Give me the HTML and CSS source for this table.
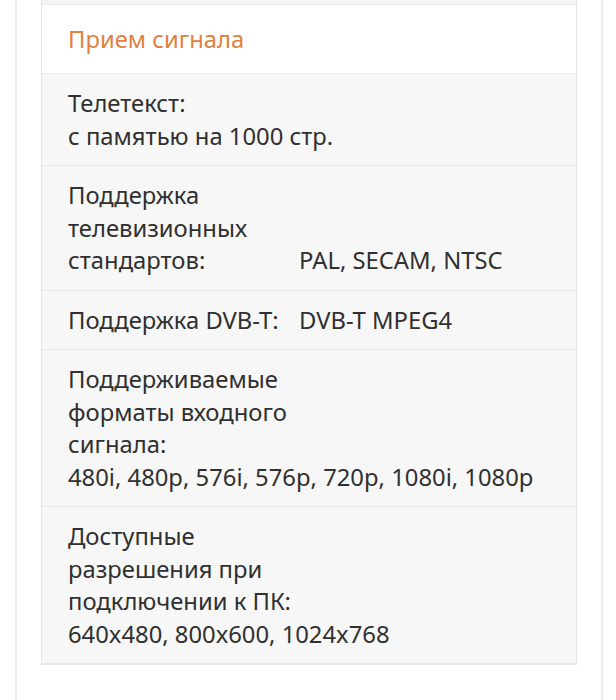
FILE: index.html
```html
<!DOCTYPE html>
<html lang="ru">
<head>
<meta charset="utf-8">
<link rel="stylesheet" href="styles.css">
</head>
<body>
<div class="panel">
  <div class="specs">
    <div class="row row-prev"></div>
    <div class="row row-head">Прием сигнала</div>
    <div class="row">
      <span class="label">Телетекст:</span>
      <span class="value">с памятью на 1000 стр.</span>
    </div>
    <div class="row">
      <span class="label">Поддержка телевизионных стандартов:</span>
      <span class="value">PAL, SECAM, NTSC</span>
    </div>
    <div class="row">
      <span class="label">Поддержка DVB-T:</span>
      <span class="value">DVB-T MPEG4</span>
    </div>
    <div class="row">
      <span class="label">Поддерживаемые форматы входного сигнала:</span>
      <span class="value">480i, 480p, 576i, 576p, 720p, 1080i, 1080p</span>
    </div>
    <div class="row">
      <span class="label">Доступные разрешения при подключении к ПК:</span>
      <span class="value">640x480, 800x600, 1024x768</span>
    </div>
  </div>
</div>
</body>
</html>
```

FILE: styles.css
```css
html, body {
  margin: 0;
  padding: 0;
  background: #ffffff;
}
body {
  font-family: "Noto Sans", "Open Sans", sans-serif;
  color: #303030;
}
.panel {
  margin-left: 15px;
  width: 588px;
  border-left: 2px solid #ececec;
  border-right: 2px solid #ececec;
  padding: 0 24px 0 24px;
  box-sizing: border-box;
  height: 700px;
  overflow: hidden;
}
.specs {
  border-left: 1px solid #e6e6e6;
  border-right: 1px solid #e6e6e6;
  border-bottom: 2px solid #e6e6e6;
}
.row {
  display: flex;
  flex-wrap: wrap;
  align-items: flex-end;
  background: #f7f7f7;
  border-top: 1.5px solid #e8e8e8;
  padding: 13px 26px;
  font-size: 23.8px;
  line-height: 32.5px;
}
.row-prev {
  border-top: 0;
  padding: 0;
  height: 4px;
  background: #f4f4f4;
}
.row-head {
  background: #ffffff;
  color: #e0813f;
  font-size: 23.8px;
  padding: 18px 26px 18px;
  line-height: 32px;
}
.label {
  width: 231px;
}
```
